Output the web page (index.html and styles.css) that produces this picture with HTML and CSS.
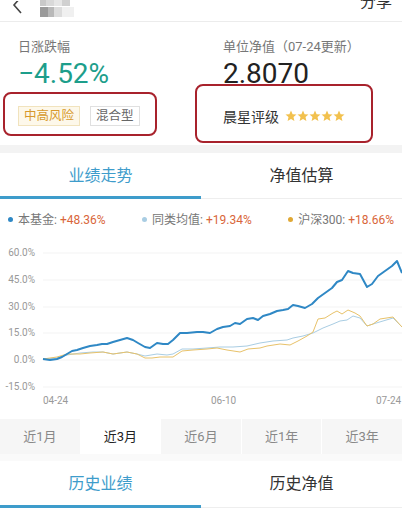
FILE: index.html
```html
<!DOCTYPE html>
<html lang="zh">
<head>
  <meta charset="UTF-8">
  <title>基金详情</title>
  <link rel="stylesheet" href="styles.css">
</head>
<body>
  <div class="topbar">
    <span class="back">
      <svg width="12" height="14" viewBox="0 0 12 14"><path d="M9 -4 L2 4 L9 12" fill="none" stroke="#444" stroke-width="1.6"/></svg>
    </span>
    <div class="blur-title">
      <div class="blur-row">
        <i class="b1"></i><i class="b2"></i><i class="b3"></i><i class="b4"></i>
      </div>
      <div class="blur-row">
        <i class="b5"></i><i class="b6"></i><i class="b7"></i><i class="b8"></i>
      </div>
    </div>
    <span class="share">分享</span>
  </div>

  <div class="info">
    <div class="info-col">
      <div class="label">日涨跌幅</div>
      <div class="value down">−4.52%</div>
      <div class="tags">
        <span class="tag risk">中高风险</span>
        <span class="tag">混合型</span>
      </div>
    </div>
    <div class="info-col">
      <div class="label">单位净值（07-24更新）</div>
      <div class="value">2.8070</div>
      <div class="rating">
        晨星评级
        <span class="stars">
          <svg width="60" height="12" viewBox="0 0 60 12">
            <g fill="#f2c14e">
              <polygon points="6,0.5 7.6,4.2 11.5,4.5 8.5,7 9.4,11 6,8.9 2.6,11 3.5,7 0.5,4.5 4.4,4.2"/>
              <polygon transform="translate(12 0)" points="6,0.5 7.6,4.2 11.5,4.5 8.5,7 9.4,11 6,8.9 2.6,11 3.5,7 0.5,4.5 4.4,4.2"/>
              <polygon transform="translate(24 0)" points="6,0.5 7.6,4.2 11.5,4.5 8.5,7 9.4,11 6,8.9 2.6,11 3.5,7 0.5,4.5 4.4,4.2"/>
              <polygon transform="translate(36 0)" points="6,0.5 7.6,4.2 11.5,4.5 8.5,7 9.4,11 6,8.9 2.6,11 3.5,7 0.5,4.5 4.4,4.2"/>
              <polygon transform="translate(48 0)" points="6,0.5 7.6,4.2 11.5,4.5 8.5,7 9.4,11 6,8.9 2.6,11 3.5,7 0.5,4.5 4.4,4.2"/>
            </g>
          </svg>
        </span>
      </div>
    </div>
    <div class="mark mark-left"></div>
    <div class="mark mark-right"></div>
  </div>

  <div class="band"></div>

  <div class="tabs">
    <div class="tab active">业绩走势</div>
    <div class="tab">净值估算</div>
  </div>

  <div class="legend">
    <span class="item"><i class="dot fund"></i>本基金: <b>+48.36%</b></span>
    <span class="item"><i class="dot avg"></i>同类均值: <b>+19.34%</b></span>
    <span class="item"><i class="dot hs"></i>沪深300: <b>+18.66%</b></span>
  </div>

  <svg class="chart" width="402" height="170" viewBox="0 236 402 170">
    <g stroke="#f3f3f3" stroke-width="1">
      <line x1="43" y1="252" x2="402" y2="252"/>
      <line x1="43" y1="279" x2="402" y2="279"/>
      <line x1="43" y1="306" x2="402" y2="306"/>
      <line x1="43" y1="332" x2="402" y2="332"/>
      <line x1="43" y1="359" x2="402" y2="359"/>
      <line x1="43" y1="386" x2="402" y2="386"/>
    </g>
    <g class="axis" text-anchor="end">
      <text x="35" y="255">60.0%</text>
      <text x="35" y="282">45.0%</text>
      <text x="35" y="309">30.0%</text>
      <text x="35" y="335">15.0%</text>
      <text x="35" y="362">0.0%</text>
      <text x="35" y="389">-15.0%</text>
    </g>
    <g class="axis">
      <text x="43" y="403">04-24</text>
      <text x="211" y="403">06-10</text>
      <text x="376" y="403">07-24</text>
    </g>
    <polyline fill="none" stroke="#a9cde3" stroke-width="1" points="43,358 57,357 67,354 80,352 93,351 103,351 113,353 127,351 137,353 145,355 157,353 167,354 173,353 182,348 193,348 207,347 220,346 233,346 247,345 260,342 273,340 287,339 293,337 303,335 313,332 323,327 333,323 340,320 347,319 353,315 360,317 367,325 373,323 383,320 393,317 402,326"/>
    <polyline fill="none" stroke="#e8c26a" stroke-width="1" points="43,358 57,356 67,353 80,353 90,352 103,351 113,353 127,351 137,353 145,357 152,357 160,356 173,356 182,350 193,349 207,348 217,347 227,349 240,351 248,348 260,347 267,345 280,343 290,344 298,340 307,335 313,331 318,318 325,317 333,312 337,310 342,313 348,309 355,312 360,315 367,325 373,323 380,318 393,316 402,326"/>
    <polyline fill="none" stroke="#2f88c5" stroke-width="2" stroke-linejoin="round" points="43,358 50,359 57,358 62,356 67,353 72,350 77,349 83,347 90,345 97,344 102,343 107,343 113,341 120,339 127,337 133,339 138,342 145,346 150,347 157,342 163,343 168,343 173,339 180,332 187,332 197,331 203,331 210,332 217,328 223,326 230,325 235,322 240,323 247,318 253,317 258,319 263,315 270,313 277,310 283,309 288,308 293,304 298,305 305,307 312,303 318,297 325,292 332,287 337,281 342,279 348,270 353,272 360,273 367,286 372,283 378,275 385,270 392,265 397,260 402,272"/>
  </svg>

  <div class="periods">
    <div class="period">近1月</div>
    <div class="period active">近3月</div>
    <div class="period">近6月</div>
    <div class="period">近1年</div>
    <div class="period">近3年</div>
  </div>

  <div class="gap"></div>

  <div class="tabs history">
    <div class="tab active">历史业绩</div>
    <div class="tab">历史净值</div>
  </div>
</body>
</html>
```

FILE: styles.css
```css
body {
  margin: 0;
  background: #fff;
  font-family: Roboto, "Noto Sans CJK SC", sans-serif;
  color: #333;
  overflow: hidden;
}

.topbar {
  height: 21px;
  border-bottom: 1px solid #ececec;
  display: flex;
  align-items: flex-start;
  position: relative;
  overflow: hidden;
}

.back {
  margin-left: 12px;
  width: 12px;
  height: 14px;
}

.blur-title {
  margin-left: 16px;
  display: flex;
  flex-direction: column;
  gap: 1px;
}

.blur-row {
  display: flex;
}

.blur-row i {
  display: block;
}

.b1 { width: 6px; height: 6px; background: #c9c9c9; }
.b2 { width: 8px; height: 6px; background: #d9d9d9; }
.b3 { width: 8px; height: 6px; background: #e6e6e6; }
.b4 { width: 8px; height: 6px; background: #d0d0d0; }
.b5 { width: 8px; height: 10px; background: #9a9a9a; }
.b6 { width: 6px; height: 10px; background: #b8b8b8; }
.b7 { width: 8px; height: 10px; background: #dcdcdc; }
.b8 { width: 12px; height: 10px; background: #f0f0f0; }

.share {
  margin-left: auto;
  margin-right: 10px;
  margin-top: -8px;
  font-size: 16px;
  line-height: 20px;
  color: #333;
}

.info {
  position: relative;
  display: grid;
  grid-template-columns: 205px 1fr;
  padding: 16px 0 19px 18px;
}

.label {
  font-size: 13px;
  line-height: 18px;
  color: #777;
}

.value {
  margin-top: 2px;
  font-size: 28px;
  line-height: 32px;
  color: #222;
}

.value.down {
  color: #1d9e8b;
}

.tags {
  display: flex;
  gap: 10px;
  margin-top: 16px;
}

.tag {
  font-size: 12.5px;
  line-height: 18px;
  padding: 0 5px;
  border: 1px solid #e0e0e0;
  color: #666;
}

.tag.risk {
  background: #fdf8ea;
  border-color: #f1e3bd;
  color: #d7982c;
}

.rating {
  display: flex;
  align-items: center;
  gap: 6px;
  margin-top: 16px;
  height: 20px;
  font-size: 14px;
  color: #333;
}

.stars svg {
  display: block;
}

.mark {
  position: absolute;
  border: 2px solid #a8222c;
  border-radius: 8px;
}

.mark-left {
  left: 3px;
  top: 70px;
  width: 150px;
  height: 40px;
}

.mark-right {
  left: 195px;
  top: 62px;
  width: 174px;
  height: 55px;
}

.band {
  height: 8px;
  background: #f3f3f3;
}

.tabs {
  display: flex;
  border-bottom: 1px solid #eee;
}

.tab {
  flex: 1;
  text-align: center;
  font-size: 16px;
  line-height: 41px;
  padding-top: 2px;
  border-bottom: 3px solid transparent;
  margin-bottom: -1px;
  color: #333;
}

.tab.active {
  color: #3e9ccb;
  border-bottom-color: #3e9ccb;
}

.legend {
  display: flex;
  justify-content: space-between;
  padding: 0 8px 0 8px;
  height: 38px;
  align-items: center;
  font-size: 12px;
  color: #777;
}

.legend b {
  font-weight: normal;
  color: #d9663a;
}

.dot {
  display: inline-block;
  width: 5px;
  height: 5px;
  border-radius: 50%;
  margin-right: 5px;
  vertical-align: middle;
  position: relative;
  top: -1px;
}

.dot.fund { background: #2f88c5; }
.dot.avg { background: #a9cde3; }
.dot.hs { background: #e0a834; }

.chart {
  display: block;
}

.axis {
  font-size: 10px;
  fill: #999;
}

.periods {
  display: flex;
  gap: 1px;
  margin-top: 12px;
  background: #fff;
}

.period {
  flex: 1;
  height: 35px;
  line-height: 35px;
  text-align: center;
  font-size: 13px;
  color: #888;
  background: #f6f6f6;
}

.period.active {
  background: #fff;
  color: #222;
}

.gap {
  height: 7px;
  background: #fafafa;
}

.history .tab {
  line-height: 42px;
}
```
